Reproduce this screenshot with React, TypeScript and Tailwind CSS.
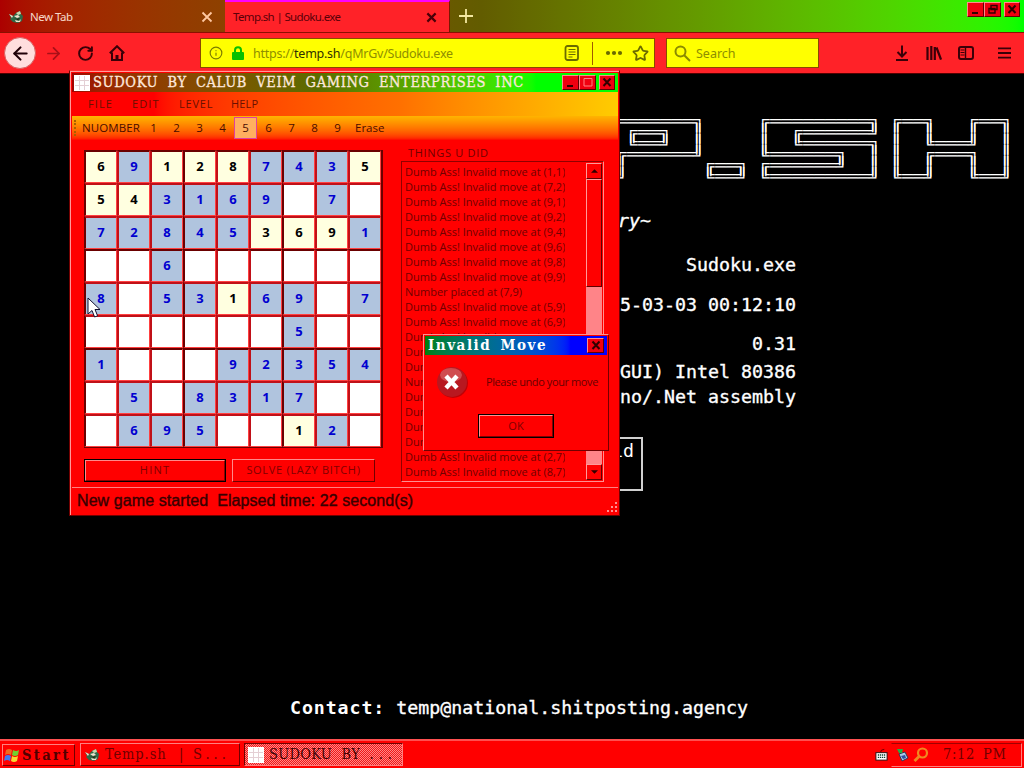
import { ReactNode } from 'react';
import { ArrowLeft, ArrowRight, RotateCw, Star, Info } from 'lucide-react';

const LOGO = [
  '═══════╗     ╔═════════╗ ╔══╗   ╔══╗',
  ' ╔══╗  ║     ║  ╔══════╝ ║  ║   ║  ║',
  ' ╚══╝  ║     ║  ╚══════╗ ║  ╚═══╝  ║',
  '╔══════╝     ╚══════╗  ║ ║  ╔═══╗  ║',
  '║       ╔══╗ ╔══════╝  ║ ║  ║   ║  ║',
  '╝       ╚══╝ ╚═════════╝ ╚══╝   ╚══╝',
].join('\n');

// "g" marks a given number, "." an empty cell
const BOARD = [
  '6g 9 1g 2g 8g 7 4 3 5g',
  '5g 4g 3 1 6 9 . 7 .',
  '7 2 8 4 5 3g 6g 9g 1',
  '. . 6 . . . . . .',
  '8 . 5 3 1g 6 9 . 7',
  '. . . . . . 5 . .',
  '1 . . . 9 2 3 5 4',
  '. 5 . 8 3 1 7 . .',
  '. 6 9 5 . . 1g 2 .',
].map(row => row.split(' '));

const INVALID = 'Dumb Ass! Invalid move at';
const HISTORY = [
  `${INVALID} (1,1)`,
  `${INVALID} (7,2)`,
  `${INVALID} (9,1)`,
  `${INVALID} (9,2)`,
  `${INVALID} (9,4)`,
  `${INVALID} (9,6)`,
  `${INVALID} (9,8)`,
  `${INVALID} (9,9)`,
  'Number placed at (7,9)',
  `${INVALID} (5,9)`,
  `${INVALID} (6,9)`,
  INVALID,
  INVALID,
  INVALID,
  'Number placed at',
  INVALID,
  INVALID,
  INVALID,
  INVALID,
  `${INVALID} (2,7)`,
  `${INVALID} (8,7)`,
];

const SERIF = "font-['DejaVu_Serif_Condensed','DejaVu_Serif',serif]";
const UI = "font-['Open_Sans',sans-serif]";

function GridIcon() {
  return (
    <svg viewBox="0 0 16 16" className="w-4 h-4 shrink-0">
      <rect width="16" height="16" fill="#fff" />
      <path d="M5.5 1v14M10.5 1v14M1 5.5h14M1 10.5h14" stroke="#e4cfd4" />
    </svg>
  );
}

function FoxIcon() {
  return (
    <svg viewBox="0 0 16 16" className="w-4 h-4 shrink-0">
      <path d="M1 5l4 2 3-3 4-2 1 3 2 2-1 5-4 2-5-1-3-3 1-1z" fill="#2f6a48" />
      <path d="M1 5l4 2-1 2zM6 7l4-1 2 2-3 1zM7 11l4 1 2-2-1 3-4 0z" fill="#f2e3cf" />
      <path d="M8 4l4-2 1 3-3 1z" fill="#c8d8b0" />
      <path d="M6 9l3 1 3-1-2 2z" fill="#280c00" />
    </svg>
  );
}

function WinButton({ children, className = '' }: { children: ReactNode; className?: string }) {
  return (
    <div className={`h-[15px] bg-[#f00010] border border-t-[#ff8a8a] border-l-[#ff8a8a] border-b-[#600000] border-r-[#600000] flex items-center justify-center ${className}`}>
      <svg viewBox="0 0 12 11" className="w-3 h-[11px]" fill="none" stroke="#300000">
        {children}
      </svg>
    </div>
  );
}

const closeGlyph = <path d="M2.5 1.5l7 7.5M9.5 1.5l-7 7.5" strokeWidth="2" />;

function Browser() {
  return (
    <div className="h-[739px] flex flex-col">
      <div className="h-[33px] flex bg-linear-to-r from-[#ac0000] via-[#625c00] via-47% to-[#00ff00] border-b border-[#8a1000] shrink-0">
        <div className="w-[225px] flex items-center pl-2 pr-3 pt-[2px] text-[#f6d8c8]">
          <FoxIcon />
          <span className="ml-[6px] font-['Noto_Sans',sans-serif] text-[11.5px] tracking-[-0.5px] grow">New Tab</span>
          <svg viewBox="0 0 12 12" className="w-3 h-3" stroke="#ffc8a0" strokeWidth="1.8">
            <path d="M1.5 1.5l9 9M10.5 1.5l-9 9" />
          </svg>
        </div>
        <div className="w-[225px] flex items-center pl-2 pr-3 bg-[#ff2228] border-t-2 border-[#ff00ff] border-r border-r-[#7a1800]">
          <span className="font-['Noto_Sans',sans-serif] text-[11.5px] tracking-[-0.65px] text-[#5a0008] grow">Temp.sh | Sudoku.exe</span>
          <svg viewBox="0 0 12 12" className="w-[11px] h-[11px]" stroke="#4a0008" strokeWidth="2.4">
            <path d="M1.5 1.5l9 9M10.5 1.5l-9 9" />
          </svg>
        </div>
        <svg viewBox="0 0 14 14" className="w-[14px] h-[14px] ml-[9px] mt-[9px]" stroke="#f4e8a0" strokeWidth="1.8">
          <path d="M7 0v14M0 7h14" />
        </svg>
        <div className="ml-auto mr-1 mt-[2px] flex">
          <WinButton className="w-[17px]"><path d="M2 9h6" strokeWidth="2" /></WinButton>
          <WinButton className="w-[17px]"><path d="M4 1.5h6v4H4zM2 4.5h6V9H2z" strokeWidth="1.4" /></WinButton>
          <WinButton className="w-4 ml-[3px]">{closeGlyph}</WinButton>
        </div>
      </div>

      <div className="h-10 flex items-center bg-[#ff2228] shrink-0">
        <div className="w-8 h-8 ml-1 rounded-full bg-[#ffdede] border border-[#d86060] flex items-center justify-center">
          <ArrowLeft size={21} strokeWidth={2.4} color="#200008" />
        </div>
        <ArrowRight size={19} strokeWidth={2.2} color="#a81018" className="ml-2" />
        <RotateCw size={17} strokeWidth={2.8} color="#3a0008" className="ml-[14px]" />
        <svg viewBox="0 0 16 16" className="w-4 h-4 ml-[15px]" fill="none" stroke="#3a0008" strokeWidth="2">
          <path d="M0.8 8.2L8 1.2l7.2 7M3 7.5V15h10V7.5" />
          <path d="M6.5 10h3v5h-3z" fill="#3a0008" stroke="none" />
        </svg>

        <div className="w-[455px] h-[30px] ml-[75px] bg-[#ffff00] border border-[#8a4a00] flex items-center">
          <Info size={14} strokeWidth={2} color="#7c7c00" className="ml-2" />
          <svg viewBox="0 0 12 14" className="w-3 h-[14px] ml-[9px]">
            <path d="M3 7V4.2a3 3 0 016 0V7" fill="none" stroke="#08c000" strokeWidth="2" />
            <rect y="6" width="12" height="8" rx="1" fill="#08c000" />
          </svg>
          <span className="ml-[9px] pt-[2px] font-['Noto_Sans',sans-serif] text-[12.5px] tracking-[-0.25px] text-[#8e8e00] whitespace-nowrap">
            https://<span className="text-[#303000]">temp.sh</span>/qMrGv/Sudoku.exe
          </span>
          <svg viewBox="0 0 16 16" className="w-4 h-4 ml-auto" fill="none" stroke="#6a6a00">
            <rect x="1.5" y="1" width="12.5" height="14" rx="2" strokeWidth="1.8" />
            <path d="M4.5 4.5h7M4.5 7h7M4.5 9.5h7M4.5 12h4" strokeWidth="1.1" />
          </svg>
          <div className="w-px h-[23px] bg-[#a05a00] ml-3" />
          <svg viewBox="0 0 18 6" className="w-[18px] h-[6px] ml-3" fill="#6a6a00">
            <circle cx="3" cy="3" r="2.1" />
            <circle cx="9" cy="3" r="2.1" />
            <circle cx="15" cy="3" r="2.1" />
          </svg>
          <Star size={17} strokeWidth={2.5} color="#6a6a00" className="ml-[9px] mr-[5px]" />
        </div>

        <div className="w-[153px] h-[30px] ml-[11px] bg-[#ffff00] border border-[#8a4a00] flex items-center">
          <svg viewBox="0 0 17 17" className="w-[17px] h-[17px] ml-[7px]" fill="none" stroke="#8a8a00" strokeWidth="2">
            <circle cx="6.5" cy="6.5" r="5" />
            <path d="M10.2 10.2L16 16" />
          </svg>
          <span className="ml-[5px] pt-[2px] font-['Noto_Sans',sans-serif] text-[12.5px] text-[#8e8e00]">Search</span>
        </div>

        <svg viewBox="0 0 16 16" className="w-4 h-4 ml-[75px]" fill="none" stroke="#3a0008" strokeWidth="2">
          <path d="M8 0.5V11M3.5 7L8 11.5 12.5 7M2 15h12" />
        </svg>
        <svg viewBox="0 0 16 16" className="w-4 h-4 ml-4" fill="none" stroke="#3a0008" strokeWidth="2.2">
          <path d="M1.5 2v13M5.3 1v14M8.8 2v13M10.5 2.5l4.5 12" />
        </svg>
        <svg viewBox="0 0 16 16" className="w-4 h-4 ml-4" fill="none" stroke="#3a0008" strokeWidth="2">
          <rect x="1" y="2" width="14" height="12" rx="2" />
          <path d="M7.5 2v12" strokeWidth="1.4" />
          <path d="M2.5 5h4M2.5 7.5h4M2.5 10h4" strokeWidth="1.1" />
        </svg>
        <svg viewBox="0 0 14 14" className="w-[13px] h-[14px] ml-6" stroke="#3a0008" strokeWidth="2">
          <path d="M0 2h14M0 7h14M0 12h14" />
        </svg>
      </div>

      <div className="grow bg-black border-t border-[#500000] pt-[43px] text-white font-['DejaVu_Sans_Mono',monospace] text-[18.27px] leading-6 [-webkit-text-stroke:0.35px_white]">
        <pre className="ml-[616px] font-['Liberation_Mono',monospace] text-[18.33px] leading-[11px] [-webkit-text-stroke:0px]">{LOGO}</pre>
        <p className="mt-[26px] ml-[618px] italic">ry~</p>
        <div className="w-[796px] text-right">
          <p className="mt-5">Sudoku.exe</p>
          <p className="mt-4">5-03-03 00:12:10</p>
          <p className="mt-[15px]">0.31</p>
          <p className="mt-1">GUI) Intel 80386</p>
          <p className="mt-px">no/.Net assembly</p>
        </div>
        <div className="mt-7 ml-[560px] w-[83px] h-[54px] border-2 border-[#d0d0d0] pr-[7px] text-right [-webkit-text-stroke:0px]">id</div>
        <p className="mt-[205px] ml-[290px]">
          <b className="tracking-[0.9px] [-webkit-text-stroke:0px]">Contact:</b> temp@national.shitposting.agency
        </p>
      </div>
    </div>
  );
}

function Cell({ value, row, col }: { value: string; row: number; col: number }) {
  const given = value.endsWith('g');
  const fill = value === '.' ? 'bg-white' : given ? 'bg-[#ffffe0] text-black' : 'bg-[#b0c4de] text-[#0000d0]';
  const left = col % 3 === 0 ? 'border-l-[#6a0000]' : 'border-l-[#c01018]';
  const top = row % 3 === 0 ? 'border-t-[#6a0000]' : 'border-t-[#c01018]';
  return (
    <div className={`h-[33px] border-l-2 border-t-2 border-r border-b border-r-[#ff4040] border-b-[#ff4040] flex items-center justify-center ${left} ${top} ${fill}`}>
      {value !== '.' && value[0]}
    </div>
  );
}

function ScrollButton({ down = false }: { down?: boolean }) {
  return (
    <div className="h-4 shrink-0 bg-[#ff0000] border border-t-[#ff9a9a] border-l-[#ff9a9a] border-b-[#600000] border-r-[#600000] flex items-center justify-center">
      <svg viewBox="0 0 8 4" className="w-[7px] h-1" fill="#300000">
        <path d={down ? 'M0 0h8L4 4z' : 'M0 4h8L4 0z'} />
      </svg>
    </div>
  );
}

function SudokuWindow() {
  return (
    <div className="absolute left-[69px] top-[70px] w-[551px] h-[446px] bg-[#ff0000] border border-t-[#ff3030] border-l-[#700000] border-r-[#700000] border-b-[#700000] flex flex-col">
      <div className="grow border-l border-t border-[#ff9a9a] flex flex-col px-px">
        <div className="h-[19px] mt-px flex items-center bg-linear-to-r from-[#a00000] via-[#5a6c00] via-45% to-[#00ff00] to-85% pl-[2px] pr-[3px]">
          <GridIcon />
          <span className={`${SERIF} ml-[3px] text-[14.5px] leading-[19px] tracking-[0.64px] [word-spacing:4.5px] text-[#ffe8dc] [-webkit-text-stroke:0.3px_#ffe8dc] whitespace-nowrap`}>
            SUDOKU BY CALUB VEIM GAMING ENTERPRISES INC
          </span>
          <div className="ml-auto flex">
            <WinButton className="w-[17px]"><path d="M2 9h6" strokeWidth="2" /></WinButton>
            <WinButton className="w-[17px]"><path d="M2 1.5h8v7.5H2z" stroke="#ff8080" /></WinButton>
            <WinButton className="w-4 ml-[3px]">{closeGlyph}</WinButton>
          </div>
        </div>

        <div className={`${UI} h-[24px] flex items-center pl-4 text-[11px] text-[#6a1000] bg-linear-to-r from-[#ff0000] from-15% via-[#ff7000] via-60% to-[#ffcc00]`}>
          <span className="w-[44px] tracking-[1.1px]">FILE</span>
          <span className="w-[47px] tracking-[1.1px]">EDIT</span>
          <span className="w-[52px] tracking-[0.8px]">LEVEL</span>
          <span className="tracking-[0.2px]">HELP</span>
        </div>

        <div className={`${UI} h-[24px] flex items-center text-[11.5px] text-[#4a0c00] bg-linear-to-b from-[#ffb400] via-[#ff7000] via-55% to-[#ff0000]`}>
          <div className="ml-[2px] h-4 border-l-2 border-dotted border-[#a86000]" />
          <span className="ml-[6px] w-[60px] tracking-[0.1px]">NUOMBER</span>
          {[1, 2, 3, 4, 5, 6, 7, 8, 9].map(n => (
            <span
              key={n}
              className={`w-[23px] text-center ${n === 5 ? 'h-[22px] leading-5 bg-[#ffb060] border border-[#e040a0]' : ''}`}
            >
              {n}
            </span>
          ))}
          <span className="ml-[6px]">Erase</span>
        </div>

        <div className="flex h-[347px]">
          <div className="w-[313px] pl-3 pt-[10px]">
            <div className="grid grid-cols-9 w-[299px] border-r-2 border-b border-[#6a0000] font-['Open_Sans',sans-serif] font-bold text-[13px]">
              {BOARD.map((cells, r) => cells.map((v, c) => <Cell key={`${r}${c}`} value={v} row={r} col={c} />))}
            </div>
            <div className={`${UI} flex gap-[6px] mt-[11px] text-[11px] text-[#800000]`}>
              <div className="w-[142px] h-[23px] border border-black">
                <div className="h-full border border-t-[#ff8a8a] border-l-[#ff8a8a] border-b-[#900000] border-r-[#900000] flex items-center justify-center tracking-[1.2px]">HINT</div>
              </div>
              <div className="w-[143px] h-[23px] border border-t-[#ff8a8a] border-l-[#ff8a8a] border-b-[#700000] border-r-[#700000] flex items-center justify-center tracking-[0.7px]">
                SOLVE (LAZY BITCH)
              </div>
            </div>
          </div>

          <div className={`${UI} ml-4 pt-[5px] text-[11px] text-[#700000]`}>
            <p className="ml-[7px] h-4 leading-4 whitespace-nowrap tracking-[0.7px]">THINGS U DID</p>
            <div className="w-[203px] h-[321px] border border-t-[#900000] border-l-[#900000] border-b-[#ff9090] border-r-[#ff9090] flex justify-between pl-[3px] pt-px pr-px pb-px">
              <ul className="leading-[15px] pt-px overflow-hidden">
                {HISTORY.map((line, i) => (
                  <li key={i} className="h-[15px] whitespace-nowrap">{line}</li>
                ))}
              </ul>
              <div className="w-4 bg-[#ff8488] flex flex-col">
                <ScrollButton />
                <div className="h-[108px] bg-[#ff0000] border border-t-[#ff9a9a] border-l-[#ff9a9a] border-b-[#600000] border-r-[#600000]" />
                <div className="grow" />
                <ScrollButton down />
              </div>
            </div>
          </div>
        </div>

        <div className="grow border-t border-[#ff8080] flex items-center justify-between pl-[5px] pb-[2px] font-['Liberation_Sans',sans-serif] text-[16px] tracking-[0.08px] text-[#380000] [-webkit-text-stroke:0.4px_#380000]">
          <span className="whitespace-pre">New game started  Elapsed time: 22 second(s)</span>
          <svg viewBox="0 0 12 12" className="w-3 h-3 self-end" fill="#ff9090">
            <path d="M9 1h2v2H9zM5 5h2v2H5zM9 5h2v2H9zM1 9h2v2H1zM5 9h2v2H5zM9 9h2v2H9z" />
          </svg>
        </div>
      </div>
    </div>
  );
}

function InvalidMoveDialog() {
  return (
    <div className="absolute left-[423px] top-[334px] w-[186px] h-[117px] bg-[#ff0000] border border-t-[#ff9090] border-l-[#ff9090] border-b-[#700000] border-r-[#700000] p-px flex flex-col">
      <div className="h-[19px] flex items-center bg-linear-to-r from-[#008000] to-[#0000ff] to-80% pl-[3px] pr-[3px]">
        <span className={`${SERIF} text-[15px] leading-[19px] tracking-[1.55px] [word-spacing:3px] font-bold text-white whitespace-nowrap`}>Invalid Move</span>
        <WinButton className="w-[17px] ml-auto">{closeGlyph}</WinButton>
      </div>
      <div className="flex items-center pl-[10px] mt-[10px]">
        <svg viewBox="0 0 34 34" className="w-[34px] h-[34px] shrink-0">
          <circle cx="18" cy="18" r="15" fill="#800008" opacity="0.5" />
          <circle cx="17" cy="17" r="15" fill="#b81820" />
          <ellipse cx="16" cy="10" rx="11" ry="7" fill="#e07070" opacity="0.6" />
          <path d="M11 11l11 12M22 11L11 23" stroke="#fff" strokeWidth="4.4" />
        </svg>
        <span className={`${UI} ml-[17px] text-[11px] tracking-[-0.4px] text-[#6a0000] whitespace-nowrap`}>Please undo your move</span>
      </div>
      <div className="w-[76px] h-[24px] mt-[15px] ml-[53px] border border-black">
        <div className={`${UI} h-full border border-t-[#ff9090] border-l-[#ff9090] border-b-[#800000] border-r-[#800000] flex items-center justify-center text-[11px] text-[#800000]`}>OK</div>
      </div>
    </div>
  );
}

function Taskbar() {
  return (
    <div className={`${SERIF} h-[29px] bg-[#ff0000] border-t-2 border-[#ff5050] flex items-center pl-[2px] pr-[2px] text-[14.5px] text-[#700000]`}>
      <div className="w-[73px] h-[22px] border border-t-[#ff8080] border-l-[#ff8080] border-b-[#700000] border-r-[#700000] flex items-center pl-px">
        <svg viewBox="0 0 16 16" className="w-4 h-4 shrink-0">
          <path d="M2 3q3-2 6 0L7 8Q4 6 1 8z" fill="#f06820" />
          <path d="M9 3q3 2 6 0l-1 5q-3 2-6 0z" fill="#70d030" />
          <path d="M1 9q3-2 6 0l-1 5q-3-2-6 0z" fill="#4078f0" />
          <path d="M8 9q3 2 6 0l-1 5q-3 2-6 0z" fill="#f8d830" />
        </svg>
        <b className="ml-[2px] tracking-[2.4px] text-[#500000]">Start</b>
      </div>
      <div className="w-[160px] h-[23px] ml-[5px] border border-t-[#ff8080] border-l-[#ff8080] border-b-[#700000] border-r-[#700000] flex items-center pl-[3px]">
        <FoxIcon />
        <span className="ml-[5px] w-[74px] tracking-[0.9px]">Temp.sh</span>
        <span className="w-[14px]">|</span>
        <span className="tracking-[4px]">S...</span>
      </div>
      <div className="w-[159px] h-[23px] ml-1 border border-t-[#700000] border-l-[#700000] border-b-[#ff8080] border-r-[#ff8080] bg-[#ff4a4a] bg-[repeating-conic-gradient(#ff8888_0_25%,#f01818_0_50%)] bg-size-[2px_2px] flex items-center pl-[3px] text-[#400000]">
        <GridIcon />
        <span className="ml-[5px] tracking-[0.3px] [word-spacing:5px] whitespace-nowrap">
          SUDOKU BY <span className="tracking-[5px]">...</span>
        </span>
      </div>
      <svg viewBox="0 0 14 14" className="w-[13px] h-[14px] ml-auto mr-[3px]">
        <path d="M6 4q0-3 4-3" stroke="#600000" fill="none" />
        <rect x="1" y="4.5" width="12" height="8" fill="#fff" stroke="#201010" />
        <path d="M3 7h8M3 9.5h8" stroke="#104030" strokeWidth="1.4" strokeDasharray="1.4 0.8" />
      </svg>
      <div className="w-[131px] h-[24px] border border-t-[#a00000] border-l-[#ff0000] border-b-[#ff8080] border-r-[#ff8080] flex items-center pl-1">
        <svg viewBox="0 0 14 14" className="w-[14px] h-[14px] shrink-0">
          <path d="M3 6l6-2 3 6-6 3z" fill="#a8c8e8" stroke="#303850" />
          <path d="M1 1l6 0-1 4-3 0z" fill="#20b040" />
          <path d="M5 8l4-1 1 3-3 1z" fill="#3050a0" />
        </svg>
        <svg viewBox="0 0 16 16" className="w-4 h-4 ml-[3px] shrink-0" fill="none" stroke="#f08820" strokeWidth="2.2">
          <circle cx="9.5" cy="6" r="4.5" />
          <path d="M6 9.5L1.5 14" strokeWidth="2.8" />
        </svg>
        <span className="ml-[14px] tracking-[0.7px] [word-spacing:3px] whitespace-nowrap">7:12 PM</span>
      </div>
    </div>
  );
}

function Pointer() {
  return (
    <svg viewBox="0 0 14 22" className="absolute left-[87px] top-[297px] w-[14px] h-[22px]">
      <path d="M1 1v16l4-3.5 2.6 6.5 3-1.2L8 12.5h5z" fill="#fff" stroke="#101030" />
    </svg>
  );
}

export default function App() {
  return (
    <div className="relative w-[1024px] h-[768px] overflow-hidden bg-black">
      <Browser />
      <Taskbar />
      <SudokuWindow />
      <InvalidMoveDialog />
      <Pointer />
    </div>
  );
}
